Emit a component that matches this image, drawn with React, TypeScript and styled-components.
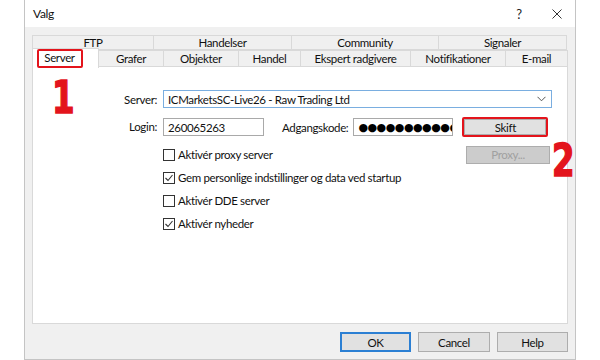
import React from 'react';
import styled, { createGlobalStyle } from 'styled-components';

const GlobalStyle = createGlobalStyle`
    html, body {
        margin: 0;
        padding: 0;
        background: #ffffff;
    }
    body {
        font-family: 'Segoe UI', Lato, 'Noto Sans', sans-serif;
        font-size: 11.5px;
        letter-spacing: -0.35px;
        color: #111111;
    }
`;

const Window = styled.div`
    position: relative;
    margin-left: 24px;
    width: 552px;
    height: 360px;
    box-sizing: border-box;
    border-left: 1px solid #c4c4c4;
    border-right: 1px solid #c4c4c4;
    border-bottom: 1px solid #c4c4c4;
    background: #f0f0f0;
    display: flex;
    flex-direction: column;
    overflow: hidden;
`;

const TitleBar = styled.div`
    height: 27px;
    flex: none;
    background: #ffffff;
    display: flex;
    align-items: center;
    padding: 0 0 0 8px;
`;

const Title = styled.div`
    flex: 1;
    font-size: 12px;
`;

const TitleButton = styled.div<{ $w: number }>`
    width: ${p => p.$w}px;
    display: flex;
    justify-content: center;
    font-size: 13px;
    color: #222;
`;

const Body = styled.div`
    flex: 1;
    display: flex;
    flex-direction: column;
    padding: 8px 7px 0 7px;
`;

const TabRow = styled.div<{ $h: number }>`
    display: flex;
    height: ${p => p.$h}px;
    align-items: flex-end;
`;

const Tab = styled.div<{ $w: number; $active?: boolean }>`
    position: relative;
    width: ${p => p.$w}px;
    height: ${p => (p.$active ? 'calc(100% + 3px)' : '100%')};
    margin-bottom: ${p => (p.$active ? '-1px' : '0')};
    box-sizing: border-box;
    border: 1px solid #d9d9d9;
    border-bottom: ${p => (p.$active ? 'none' : '1px solid #d9d9d9')};
    margin-left: -1px;
    background: ${p => (p.$active ? '#ffffff' : '#f0f0f0')};
    z-index: ${p => (p.$active ? 2 : 1)};
    display: flex;
    align-items: center;
    justify-content: center;
    line-height: 1;

    &:first-child {
        margin-left: 0;
    }
`;

const TabMark = styled.span`
    width: 46px;
    height: 19px;
    margin-right: 12px;
    margin-bottom: 1px;
    box-sizing: border-box;
    border: 2px solid #e3141c;
    border-radius: 2px;
    display: flex;
    align-items: center;
    justify-content: center;
`;

const Panel = styled.div`
    height: 258px;
    flex: none;
    box-sizing: border-box;
    background: #ffffff;
    border: 1px solid #d9d9d9;
    margin-top: -1px;
    padding: 23px 15px 0 0;
    display: grid;
    grid-template-columns: 124px 1fr;
    column-gap: 6px;
    row-gap: 9px;
    align-content: start;
`;

const Label = styled.div`
    height: 18px;
    display: flex;
    align-items: center;
    justify-content: flex-end;
`;

const Field = styled.div<{ $w?: number; $focus?: boolean }>`
    height: 18px;
    ${p => (p.$w ? `width: ${p.$w}px;` : '')}
    box-sizing: border-box;
    border: 1px solid ${p => (p.$focus ? '#7aaee0' : '#a9a9a9')};
    background: #ffffff;
    display: flex;
    align-items: center;
    padding: 0 4px;
    overflow: hidden;
    white-space: nowrap;
`;

const FieldText = styled.span`
    flex: 1;
`;

const Chevron = styled.svg`
    flex: none;
    margin-right: 1px;
`;

const LoginRow = styled.div`
    display: flex;
    align-items: center;
`;

const InlineLabel = styled.div`
    margin-left: 18px;
    margin-right: 5px;
`;

const Dots = styled.span`
    font-family: 'DejaVu Sans', sans-serif;
    font-size: 11px;
    letter-spacing: -0.5px;
    line-height: 1;
    color: #000;
`;

const MarkedButton = styled.div`
    margin-left: 9px;
    width: 86px;
    height: 20px;
    box-sizing: border-box;
    border: 2px solid #e3141c;
    border-radius: 2px;
    display: flex;
`;

const Button = styled.div<{ $w?: number; $h?: number; $disabled?: boolean; $default?: boolean }>`
    ${p => (p.$w ? `width: ${p.$w}px;` : 'flex: 1;')}
    height: ${p => (p.$h ? `${p.$h}px` : '100%')};
    box-sizing: border-box;
    border: ${p => (p.$default ? '2px solid #2b7fd3' : '1px solid #adadad')};
    background: ${p => (p.$disabled ? '#cccccc' : '#e1e1e1')};
    color: ${p => (p.$disabled ? '#a0a0a0' : '#111111')};
    display: flex;
    align-items: center;
    justify-content: center;
`;

const Options = styled.div`
    grid-column: 2;
    margin-top: -3px;
    display: grid;
    grid-template-columns: 1fr 84px;
    grid-auto-rows: 23px;
    padding-right: 2px;
`;

const CheckRow = styled.label`
    grid-column: 1;
    display: flex;
    align-items: center;
    gap: 3px;
`;

const Box = styled.span`
    width: 12px;
    height: 12px;
    box-sizing: border-box;
    border: 1px solid #333333;
    background: #ffffff;
    display: flex;
    align-items: center;
    justify-content: center;
`;

const ProxyCell = styled.div`
    grid-column: 2;
    grid-row: 1;
    display: flex;
    align-items: center;
    height: 23px;
`;

const Footer = styled.div`
    display: flex;
    justify-content: flex-end;
    gap: 7px;
    padding-top: 8px;
`;

const Callout = styled.div<{ $x: number; $y: number }>`
    position: absolute;
    left: ${p => p.$x}px;
    top: ${p => p.$y}px;
    font-family: 'DejaVu Sans Condensed', 'DejaVu Sans', sans-serif;
    font-weight: 700;
    font-size: 45px;
    letter-spacing: 0;
    line-height: 1;
    color: #e3141c;
    -webkit-text-stroke: 1.5px #e3141c;
    transform: scaleX(0.8);
    transform-origin: left top;
    z-index: 5;
`;

const backTabs: [string, number][] = [
    ['FTP', 122],
    ['Handelser', 139],
    ['Community', 148],
    ['Signaler', 129],
];

const frontTabs: [string, number][] = [
    ['Server', 67],
    ['Grafer', 66],
    ['Objekter', 76],
    ['Handel', 63],
    ['Ekspert radgivere', 111],
    ['Notifikationer', 96],
    ['E-mail', 63],
];

const options = [
    { text: 'Aktivér proxy server', checked: false },
    { text: 'Gem personlige indstillinger og data ved startup', checked: true },
    { text: 'Aktivér DDE server', checked: false },
    { text: 'Aktivér nyheder', checked: true },
];

function Check({ checked }: { checked: boolean }) {
    return (
        <Box>
            {checked ? (
                <svg width="10" height="10" viewBox="0 0 10 10">
                    <polyline points="1.5,5 4,7.5 8.5,2" fill="none" stroke="#333" strokeWidth="1.1" />
                </svg>
            ) : null}
        </Box>
    );
}

function App() {
    return (
        <>
            <GlobalStyle />
            <Window>
                <TitleBar>
                    <Title>Valg</Title>
                    <TitleButton $w={40}>?</TitleButton>
                    <TitleButton $w={36}>
                        <svg width="10" height="10" viewBox="0 0 10 10">
                            <path d="M0.5 0.5 L9.5 9.5 M9.5 0.5 L0.5 9.5" stroke="#333" strokeWidth="1" />
                        </svg>
                    </TitleButton>
                </TitleBar>
                <Body>
                    <TabRow $h={15}>
                        {backTabs.map(([name, w]) => (
                            <Tab key={name} $w={w}>{name}</Tab>
                        ))}
                    </TabRow>
                    <TabRow $h={17}>
                        {frontTabs.map(([name, w], i) => (
                            <Tab key={name} $w={w} $active={i === 0}>
                                {i === 0 ? <TabMark>{name}</TabMark> : name}
                            </Tab>
                        ))}
                    </TabRow>
                    <Panel>
                        <Label>Server:</Label>
                        <Field $focus>
                            <FieldText>ICMarketsSC-Live26 - Raw Trading Ltd</FieldText>
                            <Chevron width="9" height="6" viewBox="0 0 9 6">
                                <polyline points="0.5,0.8 4.5,4.8 8.5,0.8" fill="none" stroke="#555" strokeWidth="1" />
                            </Chevron>
                        </Field>
                        <Label>Login:</Label>
                        <LoginRow>
                            <Field $w={101}>260065263</Field>
                            <InlineLabel>Adgangskode:</InlineLabel>
                            <Field $w={100}>
                                <Dots>●●●●●●●●●●●</Dots>
                            </Field>
                            <MarkedButton>
                                <Button>Skift</Button>
                            </MarkedButton>
                        </LoginRow>
                        <Options>
                            {options.map(o => (
                                <CheckRow key={o.text}>
                                    <Check checked={o.checked} />
                                    {o.text}
                                </CheckRow>
                            ))}
                            <ProxyCell>
                                <Button $w={84} $h={18} $disabled>Proxy...</Button>
                            </ProxyCell>
                        </Options>
                    </Panel>
                    <Footer>
                        <Button $w={71} $h={20} $default>OK</Button>
                        <Button $w={72} $h={20}>Cancel</Button>
                        <Button $w={71} $h={20}>Help</Button>
                    </Footer>
                </Body>
                <Callout $x={27} $y={75}>1</Callout>
                <Callout $x={527} $y={138}>2</Callout>
            </Window>
        </>
    );
}

export default App;
